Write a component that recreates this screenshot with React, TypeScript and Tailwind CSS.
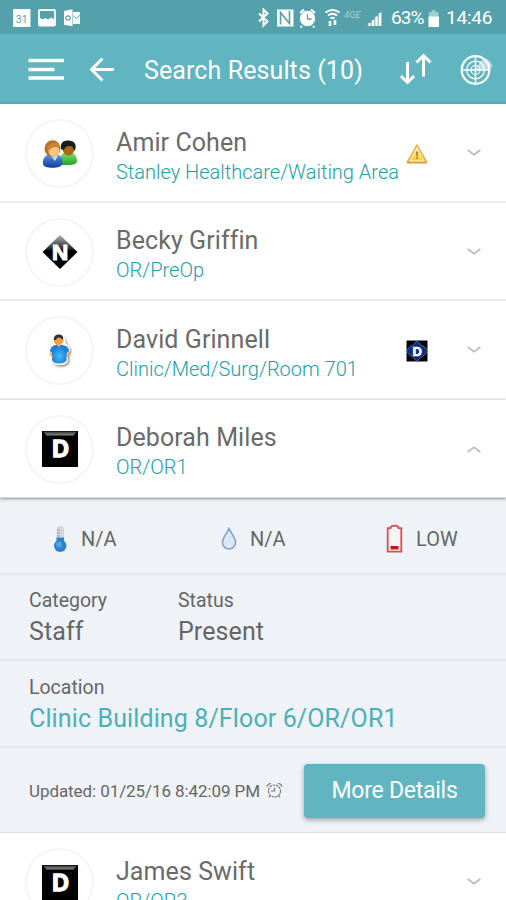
import { useState } from 'react'
import type { ReactNode } from 'react'

type Person = { id: number; name: string; location: string; avatar: ReactNode; badge?: ReactNode }

function PeopleIcon() {
  return (
    <svg width="36" height="30" viewBox="0 0 36 30">
      <defs>
        <linearGradient id="blueCoat" x1="0" y1="0" x2="0" y2="1"><stop offset="0" stopColor="#5b95e6" /><stop offset="1" stopColor="#0b3f9c" /></linearGradient>
        <linearGradient id="greenCoat" x1="0" y1="0" x2="0" y2="1"><stop offset="0" stopColor="#86e27a" /><stop offset="1" stopColor="#22a31f" /></linearGradient>
      </defs>
      <path d="M18 24c-1-8 3-11 8-11s9 3 9 9c0 3-4 4-9 4s-8 0-8-2z" fill="url(#greenCoat)" />
      <ellipse cx="26.500" cy="10" rx="6" ry="6.500" fill="#a86a14" />
      <path d="M19 10c-1-6 2-8.500 7.500-8.500s8 3.500 7 8.500l-1.500 2c0-3-2-5-5-5-2 0-4 1-5 4z" fill="#1d1b1c" />
      <path d="M1 25c-1-7 4-10 10-10s10 3 9.500 9.500c-.5 3-5 4.200-10 4.200S1.500 28 1 25z" fill="url(#blueCoat)" />
      <path d="M8 16l5-1 3 2-3 5z" fill="#c5dcf4" />
      <ellipse cx="10.500" cy="9.500" rx="8" ry="8.300" fill="#b9731d" />
      <ellipse cx="12" cy="12" rx="5.500" ry="5.800" fill="#ffc280" />
      <path d="M5 9c1-3 4-5 9-5 3 0 4 3 3.500 5-4-2-7-1-10 2z" fill="#c98630" />
    </svg>
  )
}

function DiamondN() {
  return (
    <svg width="36" height="36" viewBox="0 0 36 36">
      <defs><linearGradient id="dia" x1="0" y1="0" x2="0" y2="1"><stop offset="0" stopColor="#b5b5b5" /><stop offset="0.38" stopColor="#333" /><stop offset="0.47" stopColor="#000" /></linearGradient></defs>
      <path d="M18 1L35.500 18 18 35 .5 18z" fill="url(#dia)" />
      <text x="18" y="26" textAnchor="middle" fontFamily="Liberation Sans, sans-serif" fontWeight="700" fontSize="22.500" fill="#fff" stroke="#fff" strokeWidth="1.200">N</text>
    </svg>
  )
}

function PatientIcon() {
  return (
    <svg width="28" height="36" viewBox="0 0 28 36">
      <defs>
        <radialGradient id="gown" cx="0.5" cy="0.6" r="0.6"><stop offset="0" stopColor="#3cc0fb" /><stop offset="1" stopColor="#1671d2" /></radialGradient>
        <filter id="soft" x="-30%" y="-30%" width="160%" height="160%"><feDropShadow dx="1.200" dy="1.500" stdDeviation="1" floodOpacity="0.5" /></filter>
      </defs>
      <path d="M11 3q5-2 8 3l1 5q4 3 4 7l-2 3v7q-2 4-8 4t-8-4z" fill="#fff" filter="url(#soft)" />
      <path d="M6 14.500q2-2.500 5-3h4q4 .5 6 3.500l-.5 12.500q-2 3-7.500 3t-7-3.500z" fill="url(#gown)" />
      <path d="M4 18q0-4 4-5.500v7H5zM23 18q0-4-4-5.500v7h3z" fill="#2180dc" />
      <path d="M4.500 19.500q0 3 2.500 4.500M22.500 19.500q0 3-2 4.500" fill="none" stroke="#efa144" strokeWidth="1.600" />
      <circle cx="12.500" cy="7.500" r="4.700" fill="#f1a03c" />
      <path d="M7.800 7c0-4 2-5.500 5-5.500 4 0 5 3 4.200 5.500-2-2.500-4-2.500-6-2L10 7z" fill="#33303a" />
      <path d="M10 11.500l3 2.200 3-2.200z" fill="#f6b968" />
    </svg>
  )
}

function SquareD() {
  return (
    <svg width="36" height="36" viewBox="0 0 36 36">
      <defs><linearGradient id="bevel" x1="0" y1="0" x2="0" y2="1"><stop offset="0" stopColor="#333" /><stop offset="1" stopColor="#8b8b8b" /></linearGradient></defs>
      <path d="M0 0h36v36H0z" fill="#000" />
      <path d="M1 .5h34l-3.500 4h-27z" fill="url(#bevel)" />
      <text x="18.500" y="25.800" textAnchor="middle" fontFamily="Liberation Sans, sans-serif" fontWeight="700" fontSize="23" fill="#fff" stroke="#fff" strokeWidth="1.400">D</text>
    </svg>
  )
}

function WarningBadge() {
  return (
    <svg width="22" height="20" viewBox="0 0 22 20">
      <defs><linearGradient id="warn" x1="0" y1="0" x2="0" y2="1"><stop offset="0" stopColor="#fff3a8" /><stop offset="1" stopColor="#f6c52e" /></linearGradient></defs>
      <path d="M11 1.200L20.800 18.500H1.200z" fill="url(#warn)" stroke="#e8ad4e" strokeWidth="1.600" strokeLinejoin="round" />
      <path d="M1.500 18.800h19.200" stroke="#d09a5c" strokeWidth="1.200" />
      <path d="M11 3.800l7 13H4z" fill="none" stroke="#fff6c2" strokeWidth="1" />
      <path d="M9.900 7.500h2.200l-.4 5.200h-1.400zM10 13.500h2v1.500h-2z" fill="#b08a28" />
    </svg>
  )
}

function BlueBadge() {
  return (
    <svg width="22" height="22" viewBox="0 0 22 22">
      <path d="M.5.5h21v21H.5z" fill="#050608" />
      <path d="M11 .5L14.500 5 18.500 7 21.500 11 18.500 15 14.500 17.500 11 21.500 7.500 17.500 3.500 15 .5 11 3.500 7 7.500 5z" fill="#0b2a86" stroke="#6b7794" strokeWidth="0.800" />
      <text x="11.300" y="15.600" textAnchor="middle" fontFamily="Liberation Sans, sans-serif" fontWeight="700" fontSize="13" fill="#fff" stroke="#fff" strokeWidth="0.700">D</text>
    </svg>
  )
}

const PEOPLE: Person[] = [
  { id: 1, name: 'Amir Cohen', location: 'Stanley Healthcare/Waiting Area', avatar: <PeopleIcon />, badge: <WarningBadge /> },
  { id: 2, name: 'Becky Griffin', location: 'OR/PreOp', avatar: <DiamondN /> },
  { id: 3, name: 'David Grinnell', location: 'Clinic/Med/Surg/Room 701', avatar: <PatientIcon />, badge: <BlueBadge /> },
  { id: 4, name: 'Deborah Miles', location: 'OR/OR1', avatar: <SquareD /> },
  { id: 5, name: 'James Swift', location: 'OR/OR3', avatar: <SquareD /> },
]

function StatusBar() {
  return (
    <div className="flex h-[34px] items-center bg-[#54a1ab] pt-[3px] text-white">
      <svg className="ml-3 -mt-px" width="70" height="20" viewBox="0 0 70 20">
        <path d="M1 2q0-1 1-1h15.500q1 0 1 1v16q0 1-1 1H2q-1 0-1-1z" fill="#fff" />
        <text x="9.700" y="14.500" textAnchor="middle" fontFamily="Roboto, sans-serif" fontSize="10.500" fill="#5a9fa7">31</text>
        <rect x="27" y="2" width="16" height="15.500" rx="1" fill="#54a1ab" stroke="#fff" strokeWidth="1.800" />
        <path d="M28 10l3 1.500 2-1.500 3 1.500 3-2 3 1.500v6H28z" fill="#fff" />
        <path d="M52 3l8.500-1.700v17L52 16.700zM61 4h7v12h-7z" fill="#fff" />
        <circle cx="56" cy="10" r="2.200" fill="none" stroke="#5a9fa7" strokeWidth="1.200" />
        <path d="M61.500 8l3 2.500L68 7" fill="none" stroke="#5a9fa7" />
      </svg>
      <svg className="ml-[174px] -mt-px" width="130" height="20" viewBox="0 0 130 20" fill="none" stroke="#fff">
        <path d="M3 5.500l8.500 8-4 4V1.500l4 4-8.500 8" strokeWidth="2" />
        <path d="M21 1.500h16.500v17H21z" fill="#fff" stroke="none" />
        <path d="M24.500 16.500V4.500l9 11V3" stroke="#54a1ab" strokeWidth="1.600" />
        <circle cx="51.500" cy="10.500" r="7.700" fill="#fff" stroke="none" />
        <path d="M44 5l4-3.500M59 5l-4-3.500M46 18l-1.500 1.500M57 18l1.500 1.500" strokeWidth="2" />
        <path d="M51.500 6v5h4" stroke="#54a1ab" strokeWidth="1.300" />
        <path d="M69.500 4.500q7-5 14 0M72 7.500q4.500-3.500 9 0M74.500 10.500q2-1.600 4 0" strokeWidth="2" />
        <path d="M74 13v5M79 12v5" strokeWidth="2.600" />
        <text x="88" y="9.500" fontFamily="Roboto, sans-serif" fontSize="9.500" fontStyle="italic" fill="#a6cfd5" stroke="none">4GE</text>
        <path d="M111 18L126 3v15z" fill="#8fc3ca" stroke="none" />
        <path d="M113.500 18v-3M117 18v-6M120.500 18V8.500M124 18V5" strokeWidth="2.200" />
      </svg>
      <span className="ml-[5px] w-[37px] whitespace-nowrap text-[19px] tracking-[-0.900px]">63%</span>
      <svg className="-mt-px" width="12" height="19" viewBox="0 0 12 19">
        <path d="M3.500 1h4v2h3v5H.8V3h2.700z" fill="#9dcdd3" />
        <path d="M.5 7.500h10.500V18H.5z" fill="#fff" />
      </svg>
      <span className="ml-1.5 whitespace-nowrap text-[19px] tracking-[-0.200px]">14:46</span>
    </div>
  )
}

function Toolbar() {
  return (
    <header className="flex h-[70px] items-center border-b-2 border-[#50adb7] bg-[#60b5c0] text-white">
      <svg className="ml-7 mt-1" width="36" height="24" viewBox="0 0 36 24" fill="none" stroke="#fff" strokeWidth="3.400">
        <path d="M.5 2.500H36M.5 11.500H26.500M.5 20H36" />
      </svg>
      <svg className="ml-[25px] mt-1" width="26" height="26" viewBox="0 0 26 26" fill="none" stroke="#fff" strokeWidth="2.900">
        <path d="M25 12.500H3M13.500 1.500L2.500 12.500l11 11" />
      </svg>
      <h1 className="ml-[29px] mt-1.5 w-[231px] whitespace-nowrap text-[25px] tracking-[0.100px]">Search Results (10)</h1>
      <svg className="ml-6 mt-0.5" width="34" height="34" viewBox="0 0 34 34" fill="none" stroke="#fff" strokeWidth="3">
        <path d="M8.500 10v20M2 24l6.500 6.500 6.500-6.500M24.500 24.500V4M17.500 10.500l7-7 7 7" />
      </svg>
      <svg className="ml-[27px] mt-0.5" width="34" height="34" viewBox="0 0 34 34" fill="none" stroke="#fff">
        <circle cx="15.500" cy="18" r="13.800" strokeWidth="2.200" />
        <circle cx="15.500" cy="18" r="8.800" strokeWidth="1.300" />
        <circle cx="15.500" cy="18" r="4.500" strokeWidth="1.200" />
        <path d="M15.500 4v28M2 18h28" strokeWidth="1.600" />
        <path d="M15.500 18l5-9q5-5 9 0 3 3 3 6l-5 2z" fill="#fff" fillOpacity="0.55" stroke="none" />
      </svg>
    </header>
  )
}

function Chevron({ up }: { up: boolean }) {
  return (
    <svg width="14" height="8" viewBox="0 0 14 8" fill="none" stroke="#bbb" strokeWidth="1.700">
      <path d={up ? 'M.7 7L7 2.200 13.300 7' : 'M.7 1L7 5.800 13.300 1'} />
    </svg>
  )
}

function PersonRow({ person, open, onToggle }: { person: Person; open: boolean; onToggle: () => void }) {
  return (
    <button onClick={onToggle} className={`relative flex h-[98.500px] w-full items-start bg-white text-left ${open ? 'border-b border-[#d5d7d9] shadow-[0_1px_3px_rgba(0,0,0,0.4)] [clip-path:inset(0_0_-6px_0)]' : 'border-b-2 border-[#ececec]'}`}>
      <span className="ml-[25px] mt-[15px] flex size-[69px] shrink-0 items-center justify-center rounded-full border-2 border-[#f5f5f5]">{person.avatar}</span>
      <span className="ml-[22px] mt-[22.500px] flex w-[284px] flex-col whitespace-nowrap">
        <span className="text-[25px] leading-8 tracking-[0.080px] text-[#6a6a6a]">{person.name}</span>
        <span className="text-[20px] font-light leading-[27px] text-[#21a0a9]">{person.location}</span>
      </span>
      <span className="ml-1.5 mt-[34px] flex h-8 w-[22px] items-center">{person.badge}</span>
      <span className="ml-[39px] mt-[45px] flex">
        <Chevron up={open} />
      </span>
    </button>
  )
}

function Details() {
  return (
    <section className="bg-[#eff3f8] text-[#666]">
      <div className="flex h-[77px] items-center border-b-2 border-[#e4e8ea] pt-1.5 text-[20px]">
        <div className="ml-[53px] flex w-[168px] items-center">
          <svg width="15" height="28" viewBox="0 0 15 28">
            <rect x="3.500" y="1" width="7.500" height="18" rx="3.500" fill="#d5d8da" />
            <path d="M4 5h3M4 8h3M4 11h3" stroke="#9a9da0" />
            <path d="M3.500 12.500h7.500v7h-7.500z" fill="#2d83cc" />
            <circle cx="7.200" cy="20.800" r="6.200" fill="#2d83cc" />
            <circle cx="6" cy="19.500" r="3" fill="#4fa2e4" />
          </svg>
          <span className="ml-[13px]">N/A</span>
        </div>
        <div className="flex w-[165px] items-center">
          <svg width="16" height="24" viewBox="0 0 16 24">
            <path d="M8 1.500C6 6.500 1.500 10.500 1.500 15.500a6.500 6.500 0 0 0 13 0C14.500 10.500 10 6.500 8 1.500z" fill="#dbe8f4" stroke="#7da3cd" strokeWidth="1.600" />
          </svg>
          <span className="ml-[13px]">N/A</span>
        </div>
        <div className="flex items-center">
          <svg width="17" height="30" viewBox="0 0 17 30">
            <path d="M1.700 4.200h2.800q0-2.500 4-2.500t4 2.500h2.800v23.500H1.700z" fill="#f8f3f5" stroke="#d94e4e" strokeWidth="1.800" />
            <path d="M4.500 22h8v3.500h-8z" fill="#c9141c" />
          </svg>
          <span className="ml-[13px]">LOW</span>
        </div>
      </div>
      <div className="flex h-[85.500px] border-b-2 border-[#e4e8ea] pl-[29px] pt-3">
        <div className="w-[149px]">
          <div className="text-[19.500px] leading-7">Category</div>
          <div className="mt-px text-[25px] leading-8 tracking-[0.100px]">Staff</div>
        </div>
        <div>
          <div className="text-[19.500px] leading-7">Status</div>
          <div className="mt-px text-[25px] leading-8 tracking-[0.100px]">Present</div>
        </div>
      </div>
      <div className="h-[87.500px] border-b-2 border-[#e4e8ea] pl-[29px] pt-[13px]">
        <div className="text-[19.500px] leading-7">Location</div>
        <div className="mt-px text-[25px] leading-8 tracking-[0.120px] text-[#4bb0b8]">Clinic Building 8/Floor 6/OR/OR1</div>
      </div>
      <div className="flex h-[85px] items-center border-b border-[#dfe2e5]">
        <span className="ml-[29px] mt-[3px] w-[232px] whitespace-nowrap text-[17px] tracking-[-0.080px]">Updated: 01/25/16 8:42:09 PM</span>
        <svg className="ml-[5px]" width="17" height="17" viewBox="0 0 17 17" fill="none" stroke="#777" strokeWidth="1.200">
          <circle cx="8.500" cy="9" r="6" strokeDasharray="2.500 0.700" />
          <path d="M8.500 5.500V9H5M1 4.500q1-3 4-3M16 4.500q-1-3-4-3M4 14l-1 1.500M13 14l1 1.500" />
        </svg>
        <button className="ml-[21px] mt-px h-[54px] w-[181px] rounded-[4px] bg-[#60b5c0] pt-0.5 text-[23px] tracking-[-0.250px] text-white shadow-[0_2px_5px_rgba(0,0,0,0.35)]">More Details</button>
      </div>
    </section>
  )
}

export default function App() {
  const [openId, setOpenId] = useState(4)

  return (
    <div className="flex h-[900px] w-[506px] flex-col overflow-hidden bg-white font-[Roboto,sans-serif]">
      <StatusBar />
      <Toolbar />
      <main className="flex min-h-0 flex-1 flex-col overflow-hidden">
        {PEOPLE.map(p => (
          <div key={p.id} className="shrink-0">
            <PersonRow person={p} open={openId === p.id} onToggle={() => setOpenId(openId === p.id ? 0 : p.id)} />
            {openId === p.id && <Details />}
          </div>
        ))}
      </main>
    </div>
  )
}
